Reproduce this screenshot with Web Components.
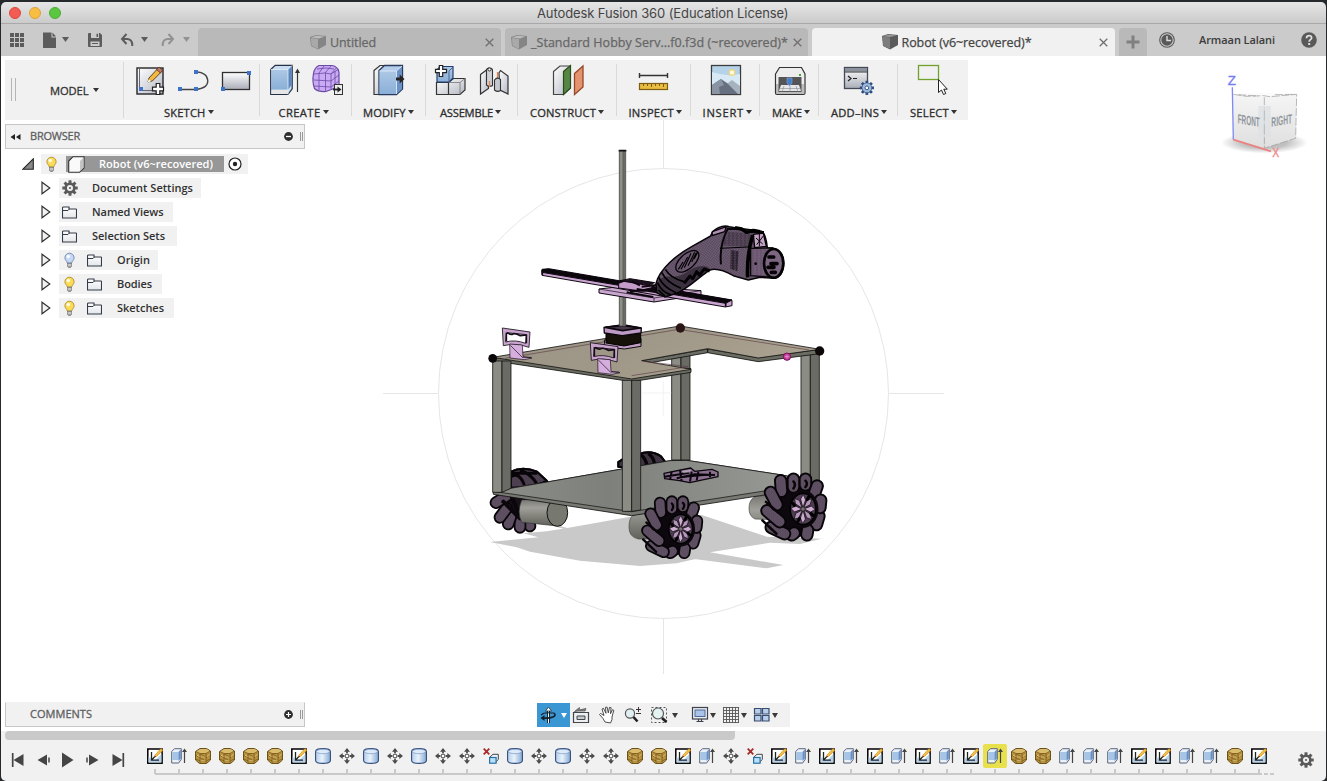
<!DOCTYPE html>
<html lang="en">
<head>
<meta charset="utf-8">
<title>Autodesk Fusion 360 (Education License)</title>
<style>
html,body{margin:0;height:100%;overflow:hidden;background:#26292c}
body{font-family:"Open Sans","Noto Sans",sans-serif;font-size:11px;color:#333}
</style>
</head>
<body>
<fusion-app></fusion-app>
<script>
const define = (name, css, html, after) => customElements.define(name, class extends HTMLElement {
  connectedCallback() {
    if (this.shadowRoot) return;
    const root = this.attachShadow({ mode: 'open' });
    root.innerHTML = `<style>${css}</style>` + (typeof html === 'function' ? html(this) : html);
    if (after) after(this, root);
  }
});

/* Text run spaced out to the width given in "w". */
define('fit-text', ':host{display:inline-block;white-space:nowrap;line-height:16px;flex:none}', '<slot></slot>', el => {
  const w = +el.getAttribute('w'), n = el.textContent.length;
  const natural = el.getBoundingClientRect().width;
  el.style.letterSpacing = ((w - natural) / n).toFixed(3) + 'px';
  el.style.width = w + 'px';
});

const defs = `<defs>
<linearGradient id="gw" x1="0" y1="0" x2="1" y2="1"><stop stop-color="#fff"/><stop offset="1" stop-color="#b4b8c2"/></linearGradient>
<linearGradient id="gv" x1="0" y1="0" x2="0" y2="1"><stop stop-color="#fff"/><stop offset="1" stop-color="#a9adb8"/></linearGradient>
<linearGradient id="gb" x1="0" y1="0" x2="0" y2="1"><stop stop-color="#adc8e6"/><stop offset="1" stop-color="#8aafd6"/></linearGradient>
<linearGradient id="gl" x1="0" y1="0" x2="1" y2="1"><stop stop-color="#e8f1fa"/><stop offset="1" stop-color="#9dbfe2"/></linearGradient>
<linearGradient id="gc" x1="0" y1="0" x2="1" y2="0"><stop stop-color="#b3cdec"/><stop offset=".45" stop-color="#e8f2fc"/><stop offset="1" stop-color="#86a9d6"/></linearGradient>
</defs>`;
const bluesq = (x, y) => `<rect x="${x}" y="${y}" width="4" height="4" fill="#3f73c8"/>`;
const drop = (x, y) => `<path d="M${x} ${y}h6l-3 5z" fill="#3a3a3a"/>`;
const bulb = (c, d) => `<path d="M7.500 1.200a4.600 4.600 0 0 0-4.600 4.600c0 2.400 2.200 3.300 2.500 5.300h4.200c.3-2 2.500-2.900 2.500-5.300a4.600 4.600 0 0 0-4.600-4.600z" fill="${c}" stroke="${d}" stroke-width=".9"/><circle cx="6.300" cy="4.600" r="1.800" fill="#fff" opacity=".85"/><path d="M5.500 11.200h4v3l-1 1.200H6.500l-1-1.200z" fill="#aaa" stroke="#666" stroke-width=".7"/><path d="M5.500 13h4" stroke="#eee" stroke-width=".8"/>`;
const gear = c => { let s = ''; for (let i = 0; i < 8; i++) s += `<rect x="6.500" y="0.300" width="3" height="4" fill="${c}" transform="rotate(${i * 45} 8 8)"/>`; return s + `<circle cx="8" cy="8" r="4.300" fill="none" stroke="${c}" stroke-width="2.600"/><circle cx="8" cy="8" r="1.100" fill="${c}"/>`; };

/* name: [viewBox, markup]; the drawing size is the viewBox size. */
const ICONS = {
  sketch: ['129 62 43 36', `<rect x="137" y="68" width="26" height="26" fill="url(#gw)" stroke="#262626" stroke-width="1.400"/><path d="M139.500 69v21.500H160" fill="none" stroke="#667"/>${bluesq(139,87)}<path d="M148 82l1-4 9.500-10.200 3.800 3.200-10 10z" fill="#f5b73c" stroke="#4b3820" stroke-width=".9"/><path d="M156.500 69.500l2.600-2.300 3.600 3.200-2.400 2.500z" fill="#c87468" stroke="#4b3820" stroke-width=".8"/><path d="M147.600 82.400l1.200-3.200 2.300 2.100z" fill="#fff"/><path d="M156.200 83.500h3.600v3.700h3.700v3.600h-3.700v3.700h-3.600v-3.700h-3.700v-3.600h3.700z" fill="#fff" stroke="#222" stroke-width="1.200"/>`],
  line: ['172 62 42 36', `<path d="M180 89.500h16q12-1.200 11.800-8.700-.3-8.400-11.800-9" fill="none" stroke="#444" stroke-width="1.300"/>${bluesq(178,87)}${bluesq(194,87)}${bluesq(194,70)}`],
  rect: ['214 62 46 36', `<rect x="222.500" y="72.500" width="27" height="17" fill="url(#gv)" stroke="#303030" stroke-width="1.300"/>${bluesq(247,71)}${bluesq(221,87)}`],
  extrude: ['264 62 42 36', `<path d="M270.700 69.500l4.500-4.200h17v23.500l-4.200 5.700h-17.300z" fill="#c9dcf0" stroke="#243046" stroke-width="1.200"/><path d="M271.300 69.500h16.700v20h-16.700z" fill="url(#gb)"/><path d="M288 69.500l3.700-3.700v19l-3.700 5z" fill="#5b86bd"/><path d="M270.700 69.500h17.300l4.200-4.200M288 69.500v25" fill="none" stroke="#e4effa" stroke-width=".8"/><path d="M271.300 90h16.500v4h-16.500z" fill="#e6e6e6"/><path d="M297.500 92V70" stroke="#333" stroke-width="1.200"/><path d="M295 73l2.500-4.500 2.500 4.500z" fill="#333"/>`],
  form: ['306 62 42 36', `<path d="M319 65.500h13q6 1 7 7v12q-1 3-5 4l-8 3q-8 .5-11.500-3-2.500-7-1-15 1-6 5.500-8z" fill="#c9abf5" stroke="#6c4aa4" stroke-width="1.200"/><path d="M314 74l11-1 6 1 8-5M314 80l17 1 8-6M314 86l17 1 8-6M319 73v17M325.500 73v18M331 74v15M319 73l5-7M325 73l6-7M331 74l6-7M317 69l9-1 8 1M335 71v15" fill="none" stroke="#6c4aa4" stroke-width=".8"/><rect x="334.500" y="84.500" width="8" height="10" fill="#eee" stroke="#333"/><path d="M333 89.500h5" stroke="#222" stroke-width="1.800"/><path d="M337.500 86.500l4 3-4 3z" fill="#222"/>`],
  modify: ['352 62 74 36', `<path d="M374 70.500l6-5h8v24l-3.500 5H374z" fill="url(#gw)" stroke="#333" stroke-width="1.200"/><path d="M379 70.500l5.500-5h18v23.500l-6 5.700H379z" fill="#b3cdeb" stroke="#293b5c" stroke-width="1.300"/><path d="M379.500 71h16.500v23h-16.500z" fill="url(#gb)"/><path d="M396.500 71l5.500-5V89l-5.500 5z" fill="#6a92c6"/><path d="M396.500 94V71h-17M396.500 71l5.500-5" fill="none" stroke="#e5effb" stroke-width=".8"/><path d="M396 77.500h3.700v-3l4.800 4.500-4.800 4.500v-3H396z" fill="#252525"/>`],
  newcomp: ['430 62 42 36', `<path d="M436.500 82.500v12h12v-12zM448.500 82.500v12h11.500l5-4.500V78.500h-11.500z" fill="url(#gw)" stroke="#333" stroke-width="1.200"/><path d="M448.500 82.500H460v12M460 82.500l5-4" fill="none" stroke="#777" stroke-width=".8"/><path d="M440 66.500h13v11.500l-4 4h-12v-12z" fill="url(#gb)" stroke="#243e70" stroke-width="1.200"/><path d="M449 82V71l4-4" fill="none" stroke="#46679b"/><path d="M439.300 65.500h3.400v3.800h3.800v3.400h-3.800v3.800h-3.400v-3.800h-3.800v-3.400h3.800z" fill="#fff" stroke="#222" stroke-width="1.200"/>`],
  joint: ['472 62 46 36', `<path d="M480.500 74.500l8-6v20l-8 5.500z" fill="url(#gw)" stroke="#333" stroke-width="1.200"/><path d="M486.500 70.500q0-2.500 3-2.500t3 2.500v15q-3 2-6-.5z" fill="#cfd1d6" stroke="#333" stroke-width="1.100"/><circle cx="489.500" cy="69.500" r="1.500" fill="#fff" stroke="#333"/><path d="M489.500 81v6M497.500 72v6" stroke="#e0854f" stroke-width="1.300"/><path d="M499 73l1.500-2.500 7.500 5.500v18l-8-4z" fill="url(#gw)" stroke="#333" stroke-width="1.200"/><path d="M494.500 80q3-3.500 6-.5v11q-3 2-6-.5z" fill="#c5c8ce" stroke="#333" stroke-width="1.100"/>`],
  construct: ['518 62 99 36', `<path d="M553.500 71.500l6.500-5.500h10v22.500l-7 6h-9.500z" fill="url(#gw)" stroke="#444" stroke-width="1.200"/><path d="M563.500 71.500l7-6V88l-7 6.500z" fill="#578544" stroke="#284d1c" stroke-width="1.200"/><path d="M574.500 73.500l8.500-7.500v21l-8.500 7.500z" fill="#e5936c" stroke="#93492b" stroke-width="1.300"/>`],
  inspect: ['617 62 74 36', `<path d="M639.500 73v5M667.500 73v5M639.500 75.500h28" stroke="#333" stroke-width="1.400"/><rect x="639.500" y="83.500" width="28" height="6" fill="#e9bc42" stroke="#7d5c13" stroke-width="1.200"/><path d="M643.500 84v2M647.500 84v2M651.500 84v3M655.500 84v2M659.500 84v2M663.500 84v3" stroke="#7d5c13"/>`],
  insert: ['691 62 69 36', `<rect x="711.500" y="65.500" width="29" height="29" fill="#b4d3e9" stroke="#3c3c3c" stroke-width="1.300"/><path d="M712 72q14 5 28 2v12h-28z" fill="#d7e9f5"/><path d="M724 86l8-6 8 6v8h-15z" fill="#a6b2be"/><path d="M712 85l9-6 6 4 11 11h-26z" fill="#667080"/><path d="M721 79l3 6-5 2 1 7h-8v-9z" fill="#8b94a3"/><rect x="729.500" y="70" width="5" height="5" rx="1" fill="#fffbe0" stroke="#f3d77d" stroke-width="1.300"/>`],
  make: ['760 62 59 36', `<path d="M775.500 74l4-6.500h22l3.500 6.500v19q0 1.500-1.500 1.500h-26.500q-1.500 0-1.500-1.500z" fill="#ededed" stroke="#333" stroke-width="1.200"/><path d="M776 84h28.500v10h-28.500z" fill="#999" opacity=".6"/><path d="M778.500 77h23v15h-23z" fill="#555"/><path d="M781 85h18l2 6h-22z" fill="#e4e6ea"/><path d="M779 88.500h22M784 86l-2 6M790 86v6M796 86l2 6" stroke="#888" stroke-width=".6"/><path d="M787 78h5v5l-2.500 3-2.500-3z" fill="#3e7fc8" stroke="#aad" stroke-width=".5"/><rect x="799" y="74" width="2" height="2" fill="#42a432"/>`],
  addins: ['819 62 79 36', `<rect x="844.500" y="67.500" width="23" height="21" fill="url(#gv)" stroke="#444a55" stroke-width="1.300"/><path d="M845 68h22v3.500h-22z" fill="#8b919d"/><path d="M845 72h22" stroke="#333"/><path d="M848 76l3 2.500-3 2.500M853 78.500h4" fill="none" stroke="#222" stroke-width="1.200"/><g transform="translate(859.500 80.500) scale(.92)">${gear('#2d4d80')}<circle cx="8" cy="8" r="5" fill="#9db9dc"/><circle cx="8" cy="8" r="2" fill="#fff" stroke="#2d4d80"/></g>`],
  select: ['898 62 70 36', `<rect x="918.500" y="65.500" width="20" height="14" fill="none" stroke="#71a32c" stroke-width="1.300"/><path d="M938.500 79.500v13l3-2.500 2 4.500 2.300-1-2-4.300h3.500z" fill="#fff" stroke="#222"/>`],
  grid: ['0 0 16 16', [0,5,10].map(y=>[0,5,10].map(x=>`<rect x="${x+1}" y="${y+1}" width="4" height="4" fill="#5c5c5c"/>`).join('')).join('')],
  file: ['0 0 28 16', `<path d="M1 .5h8.500v5H14V16H1z" fill="#5c5c5c"/><path d="M10.500 .5v4h3.500z" fill="#5c5c5c"/><path d="M20 5h7l-3.500 5z" fill="#5c5c5c"/>`],
  save: ['0 0 16 16', `<path d="M1 2q0-1 1-1h11l2 2v11q0 1-1 1H2q-1 0-1-1z" fill="#5c5c5c"/><path d="M4 1h8v5H4zM3.500 9.500h9V14h-9z" fill="#cbcbcb"/><path d="M9.500 1.700h1.600v3.200H9.500zM5 11h6v1H5z" fill="#5c5c5c"/>`],
  undo: ['0 0 30 16', `<path d="M3.500 7h5q5 .3 4.800 7" fill="none" stroke="#5c5c5c" stroke-width="2"/><path d="M7.500 2L3 7l4.500 5" fill="none" stroke="#5c5c5c" stroke-width="2"/><path d="M22 5h7l-3.500 5z" fill="#5c5c5c"/>`],
  redo: ['0 0 30 16', `<path d="M11.500 7h-5q-5 .3-4.800 7" fill="none" stroke="#929292" stroke-width="2"/><path d="M7.500 2L12 7l-4.500 5" fill="none" stroke="#929292" stroke-width="2"/><path d="M22 5h7l-3.500 5z" fill="#929292"/>`],
  cubetab: ['0 0 16 16', `<path d="M0 3l6-2 10 1v9l-8 4.500L1 12z" fill="currentColor"/><path d="M1 3.500l5.500-1.700 8 .7-5.500 2z" fill="#fff" opacity=".45"/><path d="M1 4l7 1v10l-6.500-3.500z" fill="#fff" opacity=".3"/>`],
  cubeon: ['0 0 16 16', `<path d="M0 2l6-2 10 1v10l-8 4.500L1 12z" fill="#5b5b5b"/><path d="M.5 2.500l7.500 1v11.500L1.300 11.700z" fill="#7d7d7d"/><path d="M1 2.200L6 .7l8.500.7L8 3z" fill="#999"/>`],
  close: ['0 0 9 9', `<path d="M.7.700l7.600 7.600M8.300.7L.7 8.300" stroke="#707070" stroke-width="1.300"/>`],
  plus: ['0 0 14 14', `<path d="M7 .5v13M.5 7h13" stroke="#808080" stroke-width="3"/>`],
  clock: ['0 0 16 16', `<circle cx="8" cy="8" r="7.300" fill="none" stroke="#595959" stroke-width="1.100"/><circle cx="8" cy="8" r="5.700" fill="#595959"/><path d="M8 4v4.500h4" fill="none" stroke="#ddd" stroke-width="1.400"/>`],
  help: ['0 0 16 16', `<circle cx="8" cy="8" r="7.800" fill="#595959"/><path d="M5.500 6.200q.2-2.500 2.600-2.500t2.500 2.100q0 1.200-1.300 2-1.100.7-1.100 2" fill="none" stroke="#ddd" stroke-width="1.800"/><rect x="7.200" y="11" width="2" height="2" fill="#ddd"/>`],
  folder: ['0 0 15 13', `<path d="M.5 12V2q0-1 1-1H7v2h7q.5 0 .5.800V12z" fill="url(#gl2)" stroke="#333a49" stroke-width="1.100"/><path d="M.5 4.500H6L7.500 3" fill="none" stroke="#333a49"/>`],
  gearsm: ['0 0 16 16', gear('#5a5a5a')],
  bulbon: ['0 0 15 16', bulb('#fbdc56', '#b08b2c')],
  bulboff: ['0 0 15 16', bulb('#c5d9f7', '#6f84ad')],
  body: ['0 0 17 17', `<path d="M.700 5L5 .7h11V12l-4.500 4.300H.7z" fill="#fafafa" stroke="#333" stroke-width="1.100"/><path d="M12 5l3.500-3.500v10L12 15z" fill="#c4c4c4"/>`],
  radio: ['0 0 14 14', `<circle cx="7" cy="7" r="6" fill="#fff" stroke="#222" stroke-width="1.200"/><circle cx="7" cy="7" r="2.200" fill="#222"/>`],
  tri: ['0 0 10 14', `<path d="M1 1.200v11.600l7.800-5.800z" fill="#f2f2f2" stroke="#333" stroke-width="1.200"/>`],
  tridown: ['0 0 12 12', `<path d="M.7 11.300L11.300.8v10.500z" fill="#888" stroke="#222" stroke-width="1.100"/>`],
  collapse: ['0 0 11 8', `<path d="M5 1v6L.5 4zM10.500 1v6L6 4z" fill="#222"/>`],
  minus: ['0 0 9 9', `<circle cx="4.500" cy="4.500" r="4.400" fill="#2e2e2e"/><path d="M2 4.500h5" stroke="#fff" stroke-width="1.300"/>`],
  add: ['0 0 9 9', `<circle cx="4.500" cy="4.500" r="4.400" fill="#2e2e2e"/><path d="M2 4.500h5M4.500 2v5" stroke="#fff" stroke-width="1.200"/>`],
  orbit: ['537 703 33 24', `<path d="M537 703h33v24h-33z" fill="#3b97d3"/><path d="M548.500 708v15" stroke="#18242f" stroke-width="3"/><path d="M548.500 707v16" stroke="#fff" stroke-width="1"/><path d="M545.500 711l3-4 3 4z" fill="#fff" stroke="#18242f" stroke-width=".7"/><path d="M554 713q2.500 2.500-1 4t-10 1" fill="none" stroke="#14202b" stroke-width="1.600"/><path d="M541 715q3-3 10-2h3" fill="none" stroke="#14202b" stroke-width="1.200"/><path d="M540.500 718l4-3v6z" fill="#14202b"/><path d="M561 713h6l-3 5z" fill="#fff"/>`],
  look: ['570 703 24 24', `<path d="M573.500 712.500h15v10h-15z" fill="#eef0f1" stroke="#43474c" stroke-width="1.200"/><path d="M577 716h8v3.500h-8z" fill="#c7ccd1" stroke="#43474c"/><path d="M574.500 711.500l5-4-.5 2.500 7-1.500-1 2.500h-7z" fill="#888" stroke="#555" stroke-width=".8"/>`],
  hand: ['594 703 26 24', `<path d="M605 722l-2-3.500-3.500-4 1-1 3.500 2-2-6.500 1.500-.7 2.500 5-.5-6 1.600-.2 1.200 5.800 1.200-5.500 1.600.3-.6 6 2-4 1.300.6-1.800 6.700v2.500l-1.500 3.500z" fill="#fff" stroke="#3b3b3b" stroke-width=".9"/>`],
  zoom: ['620 703 26 24', `<circle cx="630" cy="713.500" r="4.600" fill="#e1eff2" stroke="#555" stroke-width="1.200"/><path d="M633.500 717l4 4.500" stroke="#222" stroke-width="2.600"/><path d="M638.500 707v5M636 709.500h5M636 713.500h5" stroke="#333"/>`],
  fit: ['646 703 42 24', `<path d="M651.500 707.500h15v15h-15z" fill="none" stroke="#555" stroke-dasharray="2 2"/><circle cx="658" cy="713.500" r="5.500" fill="#e4f2f2" stroke="#555" stroke-width="1.200"/><path d="M662 718l4.500 4" stroke="#222" stroke-width="2.800"/>${drop(672,713)}`],
  display: ['688 703 32 24', `<rect x="692.500" y="707.500" width="15" height="11.500" fill="#eee" stroke="#3d444e" stroke-width="1.200"/><rect x="695" y="710" width="10" height="6.500" fill="#a9c4e8" stroke="#4d6b9a"/><path d="M696.500 721.500h7M698.500 719v2M701.500 719v2" stroke="#3d444e" stroke-width="1.200"/>${drop(710,713)}`],
  gridset: ['720 703 31 24', `<path d="M723.500 707v16M726.500 707v16M729.500 707v16M732.500 707v16M735.500 707v16M738.500 707v16M723 707.500h16M723 710.500h16M723 713.500h16M723 716.500h16M723 719.500h16M723 722.500h16" stroke="#555" stroke-width=".9"/>${drop(741,713)}`],
  views: ['751 703 39 24', `<path d="M754.500 708.500h6.500v5.500h-6.500zM762.500 708.500h6.500v5.500h-6.500zM754.500 715.500h6.500v5.500h-6.500zM762.500 715.500h6.500v5.500h-6.500z" fill="#b8cdea" stroke="#384d70" stroke-width="1.200"/>${drop(772,713)}`],
  first: ['0 0 14 14', `<path d="M1.700 0v14" stroke="#454545" stroke-width="1.700"/><path d="M12.500 1v12L2.500 7z" fill="#454545"/>`],
  prev: ['0 0 14 14', `<path d="M10 1.500v11L.5 7z" fill="#454545"/><path d="M12 4.500v5" stroke="#454545" stroke-width="1.500"/>`],
  play: ['0 0 14 16', `<path d="M1 .5v15L12.500 8z" fill="#454545"/>`],
  next: ['0 0 14 14', `<path d="M4 1.500v11L13.500 7z" fill="#454545"/><path d="M2 4.500v5" stroke="#454545" stroke-width="1.500"/>`],
  last: ['0 0 14 14', `<path d="M12.300 0v14" stroke="#454545" stroke-width="1.700"/><path d="M1.500 1v12L11.500 7z" fill="#454545"/>`],
  tS: ['0 0 16 16', `<rect x=".8" y="1" width="14.300" height="14.200" fill="#fff" stroke="#000" stroke-width="1.500"/><path d="M1.600 9L8 12.500 14.400 6v8.400H1.600z" fill="#b5d2ec"/><path d="M4.500 4v8.200H12M4.500 12l3.500-3.500" fill="none" stroke="#222" stroke-width="1.300"/><path d="M7 9.200L8 7l6-6.500 2 1.800-6.400 6.100z" fill="#f5bb3a" stroke="#b98327" stroke-width=".5"/><path d="M7 9.600l.9-1.900 1.200 1.100z" fill="#333"/>`],
  tE: ['0 0 16 16', `<path d="M.7 3.500L3.500.7h6.800v10.500L7.700 15H.7z" fill="#eaf2fa" stroke="#596579" stroke-width="1"/><path d="M1.300 4h5.900v8H1.300z" fill="#a5c4e6"/><path d="M7.400 4l2.400-2.600v9L7.400 13z" fill="#6490c8"/><path d="M13.500 15V2" stroke="#444" stroke-width="1.200"/><path d="M11 4l2.500-3.500L16 4z" fill="#444"/>`],
  tC: ['0 0 16 16', `<path d="M.5 3.500L5 .5h6.500l4 2.500v9l-4 3.500h-7L.5 12z" fill="#bb9440" stroke="#6c5218" stroke-width="1"/><path d="M1 3.500l4.500-2.500h6l3.500 2.300-4 2.200H5z" fill="#d9bc6d"/><path d="M1 3.500l4 2h6l4-2.200M5 5.500v9.500M11 5.500v9.500M1 7.500l4 2h6l4-2M1 11l4 2h6l4-2M5.500 6l5 3M5.500 10l5 3" fill="none" stroke="#755818" stroke-width=".8"/><path d="M5.600 9.200h5M5.600 12.800h5M2 7.300l2.500 1.300M12 8.500l2.500-1.300" stroke="#efd68e" stroke-width=".8"/>`],
  tY: ['0 0 16 16', `<path d="M.6 3.500q0-2.900 7.400-2.900t7.400 2.900v9q0 2.900-7.400 2.900T.6 12.500z" fill="url(#gc)" stroke="#304c78" stroke-width="1.100"/><ellipse cx="8" cy="3.500" rx="6.600" ry="2.200" fill="#dceafa" stroke="#7d9ac4" stroke-width=".7"/>`],
  tM: ['0 0 16 16', `<path d="M8 0l3 3.700H5zM8 16l3-3.700H5zM0 8l3.700-3v6zM16 8l-3.700-3v6z" fill="#4d4d4d"/><path d="M8 3v2.500M8 10.500v2.500M3 8h2.500M10.500 8h2.500" stroke="#4d4d4d" stroke-width="1.800"/><rect x="6.500" y="6.500" width="3" height="3" fill="#fff" stroke="#777"/>`],
  tD: ['0 0 16 16', `<path d="M.7.700l5.600 5.600M6.300.7L.7 6.300" stroke="#a82a2a" stroke-width="1.800"/><path d="M7 9l3-2.700h5.300v5L13 14" fill="#eef4fb" stroke="#444"/><rect x="6.600" y="9.500" width="6.500" height="5.700" fill="#b6e1f7" stroke="#2a71a8" stroke-width="1.200"/>`]
};
define('fx-icon', ':host{display:block;flex:none;line-height:0}svg{display:block}', el => {
  const [vb, body] = ICONS[el.getAttribute('name')], [, , w, h] = vb.split(' ');
  return `<svg width="${w}" height="${h}" viewBox="${vb}">${defs}<linearGradient id="gl2" x1="0" y1="0" x2="0" y2="1"><stop stop-color="#fff"/><stop offset="1" stop-color="#e3e6ea"/></linearGradient>${body}</svg>`;
});

define('title-bar', ':host{display:flex;align-items:center;height:21px;border-bottom:1px solid #a9a9a9;background:linear-gradient(#e6e6e6,#cbcbcb);border-radius:5px 5px 0 0;padding-left:8px;box-sizing:content-box}i{width:10px;height:10px;border-radius:50%;margin-right:8px;border:1px solid}.r{background:#f35c52;border-color:#dc473e}.y{background:#f8be41;border-color:#dda23b}.g{background:#5bc73f;border-color:#4bac34}fit-text{font:13px/20px Inter,sans-serif;color:#444;margin-left:468px;padding-top:1px}',
  '<i class="r" style="margin-left:0"></i><i class="y"></i><i class="g"></i><fit-text w="251.500">Autodesk Fusion 360 (Education License)</fit-text>');

define('doc-tab', ':host{display:flex;align-items:center;width:303px;height:28px;margin-right:4px;background:#b9b9b9;border-radius:4px 4px 0 0;color:#666;font-size:12.5px;flex:none}:host([active]){background:#f1f1f1;color:#444}.g{flex:1}fx-icon{color:#858585}.c{margin-right:6px}:host([first]) .c{margin-right:7px}:host([active]) .c{margin-right:7px}fit-text{margin:1px 0 0 4px;-webkit-text-stroke:.25px currentColor}:host([active]) fit-text{margin-left:3.500px}',
  el => `<fx-icon name="${el.hasAttribute('active') ? 'cubeon' : 'cubetab'}" style="margin-left:${el.getAttribute('lead')}px"></fx-icon><fit-text w="${el.getAttribute('w')}">${el.getAttribute('label')}</fit-text><span class="g"></span><fx-icon class="c" name="close"></fx-icon>`);

define('tab-strip', ':host{display:flex;align-items:flex-end;height:32px;background:#cbcbcb}.q{display:flex;align-items:center;height:32px;width:197px;flex:none}.new{display:flex;width:28px;height:28px;background:#b9b9b9;border-radius:4px 4px 0 0;align-items:center;justify-content:center}.u{display:flex;align-items:center;height:32px}fit-text{font-weight:600;color:#3c3c3c}',
  `<div class="q"><fx-icon name="grid" style="margin-left:8px"></fx-icon><fx-icon name="file" style="margin-left:17px"></fx-icon><fx-icon name="save" style="margin-left:17px"></fx-icon><fx-icon name="undo" style="margin-left:16px"></fx-icon><fx-icon name="redo" style="margin-left:12px"></fx-icon></div>
  <doc-tab first lead="112" w="46" label="Untitled"></doc-tab><doc-tab lead="6" w="257" label="_Standard Hobby Serv...f0.f3d (~recovered)*"></doc-tab><doc-tab active lead="70" w="130" label="Robot (v6~recovered)*"></doc-tab><div class="new"><fx-icon name="plus"></fx-icon></div>
  <div class="u"><fx-icon name="clock" style="margin-left:12px"></fx-icon><fit-text w="76" style="margin-left:24px">Armaan Lalani</fit-text><fx-icon name="help" style="margin-left:26px"></fx-icon></div>`);

define('ribbon-group', ':host{display:block;position:relative;height:60px;flex:none}.i{display:flex;height:36px;padding-top:2px}.l{display:flex;align-items:center;height:16px;margin-top:7px;font-size:11.2px;color:#2c2c2c}fit-text{-webkit-text-stroke:.3px currentColor}.l:after{content:"";border:3px solid transparent;border-top:4px solid #333;border-bottom:0;margin:-2px 0 0 2px}b{position:absolute;right:0;top:4px;width:1px;height:52px;background:#d9d9d9}:host([last]) b{display:none}',
  el => `<div class="i"><slot></slot></div><div class="l" style="padding-left:${el.getAttribute('pad')}px"><fit-text w="${el.getAttribute('w')}">${el.getAttribute('label')}</fit-text></div><b></b>`);

const groups = [['SKETCH',136,40,41.500,['sketch','line','rect'],5],['CREATE',92,18.500,42,['extrude','form'],4],['MODIFY',74,11,42.500,['modify'],0],['ASSEMBLE',92,14,53,['newcomp','joint'],4],['CONSTRUCT',99,12,66,['construct'],0],['INSPECT',74,11.500,45.500,['inspect'],0],['INSERT',69,11.500,41.500,['insert'],0],['MAKE',59,12,30,['make'],0],['ADD–INS',79,12,48,['addins'],0],['SELECT',70,12,39,['select'],0]];
define('tool-ribbon', ':host{display:flex;width:963px;height:60px;background:#f1f1f1}.m{display:flex;width:119px;box-sizing:border-box;background:linear-gradient(#d9d9d9,#d9d9d9) right 2px/1px 56px no-repeat;align-items:center;font-size:11.2px}.h{width:3px;height:23px;border:solid #b5b5b5;border-width:0 1px;margin-left:6px;margin-top:-1px}fit-text{margin:2px 0 0 34px;-webkit-text-stroke:.3px currentColor}.m:after{content:"";border:3.500px solid transparent;border-top:4px solid #333;border-bottom:0;margin-left:4px}',
  () => `<div class="m"><span class="h"></span><fit-text w="38.500">MODEL</fit-text></div>` + groups.map(([l, w, p, tw, ic, off], i) => `<ribbon-group ${i === 9 ? 'last' : ''} style="width:${w}px" pad="${p}" w="${tw}" label="${l}">${ic.map((n, k) => `<fx-icon name="${n}" style="${k ? '' : `margin-left:${off}px`}"></fx-icon>`).join('')}</ribbon-group>`).join(''));

define('panel-bar', ':host{display:flex;align-items:center;box-sizing:border-box;width:300px;height:25px;border:1px solid #c6c6c6;background:#f1f1f1;color:#5e5e5e}:host([foot]){border-top-color:#f1f1f1}.a{width:24px;display:flex;padding-left:0}.a fx-icon{margin-left:4px}.g{flex:1}.d{width:1px;height:9px;border:solid #999;border-width:0 1px;margin:0 1px 0 7px}fit-text{-webkit-text-stroke:.3px currentColor;margin-top:-1px}',
  el => `<span class="a">${el.hasAttribute('foot') ? '' : '<fx-icon name="collapse"></fx-icon>'}</span><fit-text w="${el.getAttribute('w')}">${el.getAttribute('label')}</fit-text><span class="g"></span><fx-icon name="${el.getAttribute('icon')}"></fx-icon><span class="d"></span>`);

define('tree-row', ':host{display:flex;align-items:center;height:20px;margin-bottom:4px}.b{display:flex;align-items:center;height:20px;background:#f1f1f1;margin-left:8px}fit-text{font-weight:600;color:#303030}',
  el => { const ic = el.getAttribute('icons').split(' '); return `<fx-icon name="tri" style="margin-left:41px"></fx-icon><div class="b" style="width:${el.getAttribute('box')}px">${ic.map((n, i) => `<fx-icon name="${n}" style="margin-left:${i ? 10 : 3}px"></fx-icon>`).join('')}<fit-text w="${el.getAttribute('w')}" style="margin-left:${ic.length > 1 ? 15 : ic[0] === 'gearsm' ? 14 : 15}px">${el.getAttribute('label')}</fit-text></div>`; });

define('browser-tree', ':host{display:block;padding:5px 0 0;margin-left:-5px}.r{display:flex;align-items:center;height:20px;margin-bottom:4px}.b{display:flex;align-items:center;width:207px;height:20px;background:#f1f1f1;margin-left:7px}.s{display:flex;align-items:center;width:158px;height:16px;background:#979797;color:#fff;margin-left:7px}.s fx-icon{margin-left:2px}fit-text{font-weight:600;margin-left:14px}',
  `<div class="r"><fx-icon name="tridown" style="margin-left:22px"></fx-icon><div class="b"><fx-icon name="bulbon" style="margin-left:3px"></fx-icon><div class="s"><fx-icon name="body"></fx-icon><fit-text w="114">Robot (v6~recovered)</fit-text></div><fx-icon name="radio" style="margin-left:4px"></fx-icon></div></div>
  <tree-row box="142" icons="gearsm" w="101" label="Document Settings"></tree-row><tree-row box="114" icons="folder" w="71.500" label="Named Views"></tree-row><tree-row box="118" icons="folder" w="73" label="Selection Sets"></tree-row><tree-row box="99" icons="bulboff folder" w="33" label="Origin"></tree-row><tree-row box="103" icons="bulbon folder" w="35" label="Bodies"></tree-row><tree-row box="115" icons="bulbon folder" w="47" label="Sketches"></tree-row>`);

define('nav-bar', ':host{display:flex;width:253px;height:24px;background:#f1f1f1}', ['orbit','look','hand','zoom','fit','display','gridset','views'].map(n => `<fx-icon name="${n}"></fx-icon>`).join(''));

/* Robot model: an angled mecanum wheel is built from capsule shaped rollers. */
const roll = ([a, b, c, d]) => `<path d="M${a} ${b}L${c} ${d}" stroke="#080508" stroke-width="38"/><path d="M${a} ${b}L${c} ${d}" stroke="#6f5e74" stroke-width="27"/><path d="M${a} ${b}L${c} ${d}" stroke="url(#dots)" stroke-width="29"/>`;
const wheel = (x, y, s) => {
  let petals = '';
  for (let i = 0; i < 8; i++) petals += `<path d="M0-4L8-24 1-38-7-27z" fill="${i % 2 ? '#b597ba' : '#d0aed4'}" stroke="#140d15" stroke-width="2" transform="rotate(${i * 45})"/>`;
  return `<g transform="translate(${x} ${y}) scale(${s})" stroke-linecap="round"><ellipse cx="-22" cy="0" rx="78" ry="80" fill="#0c080d"/>` +
    [[-27,-84,-27,-62],[7,-84,7,-68],[40,-65,33,-45],[45,20,38,44],[50,-25,48,-4],[13,60,11,73],[-25,68,-32,73],[-63,-80,-61,-50],[-90,52,-52,70],[-102,5,-66,36],[-92,-47,-74,-12]].map(roll).join('') +
    `<path d="M-27-78q8 8 0 20M7-80q8 8 0 18M-115 32l40 38M-105-20l35 30" fill="none" stroke="#080508" stroke-width="7"/><ellipse rx="46" ry="54" fill="#0d080e" cx="-2"/><ellipse rx="36" ry="44" fill="#4c3d50" stroke="#000" stroke-width="4"/><g transform="scale(.9 1.080)">${petals}</g><circle r="5" fill="#77746e"/><path d="M-29-16l5 6M28 18l-6-5M-14 34l4-7M16-34l-4 7" stroke="#000" stroke-width="9"/></g>`;
};
const post = (x, y1, y2, y3) => `<path d="M${x} ${y1}h28v${y3 - y1}h-28z" fill="#8b8c84" stroke="#161616" stroke-width="2.500"/><path d="M${x + 28} ${y1}h27v${y2 - y1}l-27 ${y3 - y2}z" fill="#6a6b65" stroke="#161616" stroke-width="2.500"/>`;
const bracket = (x, y) => `<g transform="translate(${x} ${y})" stroke="#150d17" stroke-width="2.500"><path d="M0 0l83 12-3 46q-40-14-77-5zM13 14l-3 28q28-8 60 4l3-26z" fill="#c9a5ce" fill-rule="evenodd"/><path d="M14 14q12 8 18 4t22 5l18-2M12 14v26M72 20v26" fill="none" stroke-width="5"/><path d="M22 48l38 3 2 35 27 4-24 5-42-5z" fill="#d5aede" stroke-width="2"/><path d="M24 52l38 38M62 88h24" stroke-width="2"/></g>`;
define('model-scene', ':host{display:block}svg{display:block}', `<svg width="1325" height="675" viewBox="1 56 1325 675">
<defs><pattern id="dots" width="5" height="5" patternUnits="userSpaceOnUse"><path d="M0 1h2M3 3h2M1 5V4" stroke="#1b141d" stroke-width="1.200"/></pattern>
<pattern id="mesh" width="6" height="6" patternUnits="userSpaceOnUse" patternTransform="rotate(35)"><path d="M0 1h6M1 0v6" stroke="#120c14" stroke-width="1.300"/></pattern>
<pattern id="vert" width="4" height="5" patternUnits="userSpaceOnUse"><path d="M1 0v5M0 2h4" stroke="#110a13" stroke-width="1.400"/></pattern>
<linearGradient id="wood" x1="0" y1="0" x2="1" y2=".3"><stop stop-color="#9c9484"/><stop offset=".5" stop-color="#9f9787"/><stop offset="1" stop-color="#aaa190"/></linearGradient>
<linearGradient id="base" x1="0" y1="0" x2="1" y2="0"><stop stop-color="#8b8d87"/><stop offset=".35" stop-color="#7e807b"/><stop offset="1" stop-color="#9b9d98"/></linearGradient>
<linearGradient id="cyl" x1="0" y1="0" x2="0" y2="1"><stop stop-color="#73736f"/><stop offset=".35" stop-color="#a09f99"/><stop offset="1" stop-color="#61625b"/></linearGradient>
<linearGradient id="face" x1="0" y1="0" x2="0" y2="1"><stop stop-color="#f5f5f5"/><stop offset="1" stop-color="#dfdfdf"/></linearGradient>
<radialGradient id="soft"><stop offset=".5" stop-color="#aaa"/><stop offset="1" stop-color="#aaa" stop-opacity="0"/></radialGradient></defs>
<g fill="none" stroke="#e6e6e6"><circle cx="663.500" cy="393.500" r="225"/><path d="M663.500 120v48M663.500 618v56M383 393.500h55M889 393.500h55"/></g>
<g transform="translate(480 320) scale(.33333)" stroke-linejoin="round">
<path d="M30 666L175 652 130 640 200 634 240 628 330 612 450 590 665 585 860 650 1025 656 960 672 870 668 690 697 910 735 860 745 620 714 650 716 590 730 480 738 300 722 150 695 110 682z" fill="#c9c9c9"/><path d="M180 605L290 634" stroke="#c9c9c9" stroke-width="5"/>
<g stroke="#080508" stroke-width="6"><path d="M415 440V426l16-10 22 4 22-16q35-16 68 5l15 20-60 20z" fill="#4a3d4e"/><path d="M415 440V426l16-10 22 4 22-16q35-16 68 5l15 20-60 20z" fill="url(#dots)"/><path d="M478 402q20 10 24 40M505 400q16 12 18 30M450 425l10 20" fill="none" stroke-width="10"/><path d="M93 455q35-18 78 0l30 28-50 20H93z" fill="#5a4b5e"/><path d="M93 455q35-18 78 0l30 28-50 20H93z" fill="url(#dots)"/><path d="M93 470q25-15 40 25M120 450q30 10 50 40M93 460l78 0" fill="none" stroke-width="9"/></g>
<g stroke-linecap="round"><ellipse cx="105" cy="565" rx="40" ry="55" fill="#171019"/>${[[150,618,142,600],[120,622,120,600],[85,612,92,592],[80,565,60,592],[80,528,48,548]].map(roll).join('')}<path d="M70 545l50 50M95 530l25 60" stroke="#0a060b" stroke-width="12"/></g>
<path d="M125 540l100-5v82l-100-10q-15-30 0-67z" fill="url(#cyl)" stroke="#333" stroke-width="2"/><ellipse cx="232" cy="578" rx="31" ry="41" fill="#777870" stroke="#111" stroke-width="3"/>
<path d="M460 585l50-8v80h-35q-28-6-28-35 0-28 13-37zM825 530l60-8v77l-60-2q-18-8-18-32 0-26 18-35z" fill="url(#cyl)" stroke="#444" stroke-width="2"/>
<path d="M40 514L570 422l50-1 280 43 120 23v12L455 587 40 523z" fill="#777972" stroke="#111" stroke-width="2.500"/>
<path d="M40 514L570 422l50-1 280 43 120 23L455 575z" fill="url(#base)" stroke="#151515" stroke-width="2.200"/>
${post(575,100,420,420)}${post(963,95,485,487)}
<g stroke="#0c070e" stroke-width="4"><path d="M552 460l80-16 12 10 52-6 18 8v14l-85 18-30-6-45-6z" fill="#8b7190"/><path d="M553 470l75-12M590 475l55-12 60 2M600 450l5 33M575 455l-5 25M635 455l-5 30M655 455l-5 26M690 455v17" stroke-width="6"/><path d="M605 452l30-3-8 9-15 2zM600 470l15 4" stroke="none" fill="#fff" opacity=".35"/></g>
<path d="M38 112v10L455 185l178-28v-11zM683 87v11l152 27 185-24V88L835 113zM485 122l198-35v11l-170 30z" fill="#6b6d63" stroke="#111" stroke-width="2.500"/>
${post(38,123,505,517)}${post(427,181,570,574)}
<path d="M38 112L600 18l420 70-185 26-152-28-198 36 148 26-178 29z" fill="url(#wood)" stroke="#151515" stroke-width="2.500"/>
<path d="M75 115L597 28l390 62M490 124l135 16-170 27" fill="none" stroke="#5d414a" stroke-width="2"/>
<circle cx="38" cy="115" r="13" fill="#0b0708"/><circle cx="601" cy="24" r="14" fill="#2a1515"/><circle cx="1019" cy="93" r="14" fill="#0c0709"/><circle cx="921" cy="110" r="11" fill="#c53d99" stroke="#77155b" stroke-width="3"/><path d="M914 110h14M921 104v12" stroke="#f4a8dc" stroke-width="2"/>
<g stroke="#dedede" stroke-width="2" opacity=".5"><path d="M550 185v103M485 219h90"/></g>
${wheel(602,627,.98)}${wheel(969,567,1.060)}
</g>
<g transform="translate(480 140) scale(.33333)" stroke-linejoin="round">
<path d="M373 600l110-5v24l-50 8-58-7z" fill="#c09dc5" stroke="#100a0f" stroke-width="3"/><path d="M378 570h104v38l-50 10-54-9z" fill="#151008" stroke="#000" stroke-width="3"/>
<path d="M372 562l57-8 55 10-1 15-56 8-54-8z" fill="#bd9bc4" stroke="#0c070d" stroke-width="4"/><path d="M376 562l53-6 52 8-53 8z" fill="#4a394d" stroke="#0c070d" stroke-width="5"/>
<path d="M418 31h19v527h-19z" fill="#8d8f87" stroke="#454643" stroke-width="2.500"/><path d="M431 33v524" stroke="#62645e" stroke-width="7"/><path d="M416 32h23" stroke="#111" stroke-width="5"/>
<g stroke="#0e0710" stroke-width="3"><path d="M357 447l90-10 216 15v12L522 486 357 459z" fill="#caa7cf"/><path d="M357 447l165 27v12M522 474l141-22" fill="none" stroke-width="2"/><path d="M186 390l20-2 550 93v16l-20 4-550-95z" fill="#c9a4d0"/><path d="M186 388l20-2 550 94-19 10-551-93z" fill="#0a060c"/><path d="M737 485v15M187 392v12" stroke-width="5"/><path d="M416 430l30-11 70 9v15l-40 9-60-8z" fill="#c49cca"/><path d="M420 422l30-6 74 12-22 8z" fill="#1c121f"/><path d="M470 447l60 10 50-4M455 424l25 12M450 454l80-4M485 440l45-5M540 445l60 8M440 457l80 14" stroke-width="6"/></g>
<path d="M528 430C540 385 590 345 635 320L692 288C698 264 730 254 748 260L765 263 845 274Q858 282 862 323C900 323 912 345 911 370Q909 411 884 415L840 412 805 420 760 407Q715 382 690 390C666 402 622 450 585 461L555 471 530 458z" fill="#76637b" stroke="#080409" stroke-width="4.500"/>
<path d="M528 430C540 385 590 345 635 320L692 288 748 260 845 274 862 323 840 412 805 420 760 407Q715 382 690 390C666 402 622 450 585 461L555 471 530 458z" fill="url(#mesh)" opacity=".55"/>
<path d="M530 432C555 390 570 425 615 400Q660 365 690 385C665 404 620 450 585 461L555 471 530 458z" fill="#0c070d" opacity=".45"/>
<path d="M532 428q15 30 40 36M536 412q15 30 52 46M545 397q15 30 58 48M556 388q15 26 56 37M535 450l20 18" fill="none" stroke="#000" stroke-width="5"/>
<ellipse cx="622" cy="364" rx="42" ry="22" transform="rotate(-42 622 364)" fill="#6b5870" stroke="#080508" stroke-width="4"/><path d="M595 388l14-22M603 388l20-37M613 383l20-43M624 377l20-40M635 366l14-28M643 356l10-20" stroke="#000" stroke-width="3.500"/>
<path d="M612 430l18-22 8 8 12-21 8 10 15-18 16 6" fill="none" stroke="#050306" stroke-width="9"/>
<path d="M697 275l42-15-5 15-38 12z" fill="#ad8eb3" stroke="#080408" stroke-width="4"/><path d="M745 263q-28 50-22 110M742 266l40 2 20 8 50 0" fill="none" stroke="#08050a" stroke-width="6"/><path d="M745 275l75 6-15 40-80-5z" fill="url(#vert)" opacity=".5"/><path d="M752 330l24 4-4 60-22-8z" fill="url(#vert)"/><path d="M720 325l85 -4" stroke="#000" stroke-width="3"/><path d="M765 263l20 4 15 10 20-6 20 4" fill="none" stroke="#000" stroke-width="10"/>
<path d="M820 283l30-4 9 40-35 4z" fill="#c3a2c6" stroke="#000" stroke-width="4"/><path d="M828 294l20 18M850 288l-20 26M838 282v37" stroke="#000" stroke-width="3"/>
<path d="M818 286q-18 60-15 126" fill="none" stroke="#000" stroke-width="11"/><path d="M812 325l67-1v88l-67-5z" fill="#806986" stroke="#080409" stroke-width="4"/><path d="M812 325l67-1v88l-67-5z" fill="url(#vert)" opacity=".3"/><circle cx="827" cy="371" r="4" fill="#000"/>
<ellipse cx="881" cy="370" rx="29" ry="43" fill="#7d6681" stroke="#030203" stroke-width="8"/><path d="M867 351h14M873 371h18M864 382h18M874 397h12" stroke="#050306" stroke-width="11" stroke-linecap="round"/>
${bracket(67,564)}${bracket(331,608)}
</g>
<g transform="translate(850 0) scale(.33333)">
<ellipse cx="1243" cy="428" rx="130" ry="32" fill="url(#soft)" opacity=".75"/>
<path d="M1150 283l55-5 135 4-97 9z" fill="#fbfbfb"/><path d="M1150 283l93 8v154l-93-27z" fill="url(#face)"/><path d="M1243 291l97-9-3 133-94 30z" fill="url(#face)"/>
<path d="M1150 283l40 6 50-2 20 3 80-7-3 132-94 30V291M1165 284l60 4M1275 284l60-1" fill="none" stroke="#999" stroke-width="2" stroke-dasharray="24 5"/><path d="M1225 318h37v94h-37z" fill="#dce2e5" opacity=".75"/><path d="M1243 332v30M1243 372v32" stroke="#aaa" stroke-width="2"/>
<path d="M1147 262l3 157" stroke="#8088f5" stroke-width="4"/><path d="M1150 419l113 35" stroke="#ed8181" stroke-width="5"/>
<g font-family="Liberation Sans,sans-serif" font-weight="700" fill="#8f959b"><text x="0" y="0" font-size="40" textLength="66" lengthAdjust="spacingAndGlyphs" transform="translate(1163 370) skewY(9)">FRONT</text><text x="0" y="0" font-size="40" textLength="62" lengthAdjust="spacingAndGlyphs" transform="translate(1264 380) skewY(-9)">RIGHT</text></g>
<g font-family="Liberation Sans,sans-serif" font-size="40"><text x="1133" y="254" fill="#747df3" stroke="#747df3">Z</text><text x="1267" y="472" fill="#f28585" stroke="#f28585" textLength="21" lengthAdjust="spacingAndGlyphs">X</text></g>
</g></svg>`);

define('view-port', ':host{display:flex;flex-direction:column;position:relative;height:675px;background:#fff}model-scene{position:absolute;inset:0}.c{position:relative;display:flex;flex-direction:column;height:100%;padding:4px 0 4px 4px;box-sizing:border-box}.g{flex:1}.f{display:flex;align-items:flex-start}nav-bar{margin:1px 0 0 232px}panel-bar{margin-top:4px}.f panel-bar{margin-top:0}',
  `<model-scene></model-scene><div class="c"><tool-ribbon></tool-ribbon><panel-bar label="BROWSER" w="50" icon="minus"></panel-bar><browser-tree></browser-tree><div class="g"></div><div class="f"><panel-bar foot label="COMMENTS" w="62" icon="add"></panel-bar><nav-bar></nav-bar></div></div>`);

define('time-step', ':host{display:flex;flex-direction:column;align-items:center;width:24px;height:30px;flex:none}.k{display:flex;width:24px;height:24px;align-items:center;justify-content:center;border-radius:2px}:host([current]) .k{background:#e8e04c}.t{width:2px;height:5px;margin-top:1px;background:#c9c9c9}',
  el => `<div class="k"><fx-icon name="t${el.getAttribute('kind')}"></fx-icon></div><div class="t"></div>`);
const steps = 'SECCCCSYMYMYMMDYMYMMCCSEMDSESESESESECCEEESSEECS';
define('time-line', ':host{display:block;height:50px;background:#f1f1f1;border-radius:0 0 5px 5px;overflow:hidden}.s{width:730px;height:9px;margin-left:4px;background:#c9c9c9;border-radius:4px 0 4px 4px}.r{display:flex;height:41px}.p{display:flex;align-items:center;width:142px;height:24px;margin-top:8px;flex:none}.p fx-icon:nth-child(1){margin-left:10px}.p fx-icon:nth-child(2){margin-left:12px}.p fx-icon:nth-child(3){margin-left:10px}.p fx-icon:nth-child(4){margin-left:10px}.p fx-icon:nth-child(5){margin-left:12px}.w{margin-top:4px}.q{display:flex}.l{width:1107px;height:2px;margin-left:12px;background:#c9c9c9;margin-top:-1px}.dash{display:flex;align-items:center}.dash i{width:4px;height:2px;background:#c9c9c9;margin:-1px 0 0 2px}.e{margin:12px 0 0 24px}',
  `<div class="s"></div><div class="r"><div class="p">${['first','prev','play','next','last'].map(n => `<fx-icon name="${n}"></fx-icon>`).join('')}</div><div class="w"><div class="q">${[...steps].map((k, i) => `<time-step kind="${k}"${i === 35 ? ' current' : ''}></time-step>`).join('')}</div><div class="dash"><div class="l"></div><i></i><i></i></div></div><fx-icon class="e" name="gearsm"></fx-icon></div>`);

define('fusion-app', ':host{display:flex;flex-direction:column;width:1325px;height:779px;padding:2px 1px 0;background:#26292c}', '<title-bar></title-bar><tab-strip></tab-strip><view-port></view-port><time-line></time-line>');
</script>
</body>
</html>
